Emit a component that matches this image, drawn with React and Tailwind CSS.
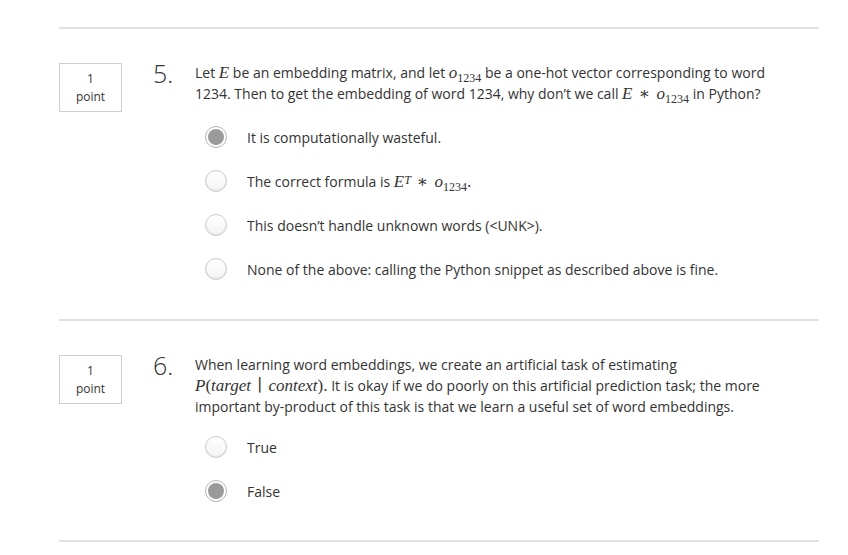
import React from 'react';

const mathFont = "font-['Liberation_Serif','DejaVu_Serif',serif] text-[17px] leading-none";

// italic math variable
const V = ({ children }) => <span className="italic">{children}</span>;

const Sub = ({ base, sub }) => (
    <span className={mathFont}>
        <V>{base}</V>
        <span className="relative top-[4px] text-[12px] leading-none not-italic">{sub}</span>
    </span>
);

const Radio = ({ checked }) =>
    checked ? (
        <span className="flex h-[22px] w-[22px] shrink-0 items-center justify-center rounded-full border border-[#b4b4b4] bg-white">
            <span className="h-[16px] w-[16px] rounded-full bg-[#9a9a9a]" />
        </span>
    ) : (
        <span className="h-[22px] w-[22px] shrink-0 rounded-full border border-[#c9c9c9] bg-gradient-to-b from-white to-[#f3f3f3] shadow-[inset_0_-1px_1px_rgba(0,0,0,0.06)]" />
    );

const Option = ({ checked, children }) => (
    <div className="flex h-[44px] items-center pl-[10px]">
        <Radio checked={checked} />
        <div className="ml-[20px] text-[14px] text-[#333]">{children}</div>
    </div>
);

const Question = ({ num, text, children, textTop, optsTop, bottom }) => (
    <div className={`flex border-t-2 border-[#e2e2e2] pt-[34px] ${bottom}`}>
        <div className="flex h-[49px] w-[63px] shrink-0 flex-col items-center justify-center border border-[#cfcfcf] text-[12px] leading-[18px] text-[#333]">
            <span>1</span>
            <span>point</span>
        </div>
        <div className="ml-[31px] mt-[-6px] w-[42px] shrink-0 text-[25px] font-light leading-[32px] text-[#333]">{num}.</div>
        <div className="flex-1">
            <div className={`${textTop} pr-[40px] text-[14px] leading-[21px] text-[#333]`}>{text}</div>
            <div className={optsTop}>{children}</div>
        </div>
    </div>
);

export default function App() {
    return (
        <div className="min-h-[555px] bg-white px-[59px] pt-[27px] font-['Open_Sans',sans-serif] text-[#333]">
            <div className="w-[760px]">
                <Question
                    num="5"
                    textTop="mt-[-1px]"
                    optsTop="mt-[11px]"
                    bottom="pb-[28px]"
                    text={
                        <>
                            Let <span className={mathFont}><V>E</V></span> be an embedding matrix, and let <Sub base="o" sub="1234" /> be a one-hot vector corresponding to word 1234. Then to get the embedding of word 1234, why don’t we call{' '}
                            <span className={mathFont}><V>E</V> <span className="mx-[2px]">∗</span> </span><Sub base="o" sub="1234" /> in Python?
                        </>
                    }
                >
                    <Option checked>It is computationally wasteful.</Option>
                    <Option>
                        The correct formula is{' '}
                        <span className={mathFont}>
                            <V>E</V>
                            <sup className="relative top-[-3px] text-[12px] italic">T</sup>
                            <span className="mx-[6px]">∗</span>
                        </span>
                        <Sub base="o" sub="1234" />
                        <span className={mathFont}>.</span>
                    </Option>
                    <Option>This doesn’t handle unknown words (&lt;UNK&gt;).</Option>
                    <Option>None of the above: calling the Python snippet as described above is fine.</Option>
                </Question>
                <Question
                    num="6"
                    textTop="mt-[-1px]"
                    optsTop="mt-[8px]"
                    bottom="pb-[27px]"
                    text={
                        <>
                            When learning word embeddings, we create an artificial task of estimating
                            <br />
                            <span className={mathFont}>
                                <V>P</V>(<V>target</V> <span className="mx-[2px]">∣</span> <V>context</V>).
                            </span>{' '}
                            It is okay if we do poorly on this artificial prediction task; the more important by-product of this task is that we learn a useful set of word embeddings.
                        </>
                    }
                >
                    <Option>True</Option>
                    <Option checked>False</Option>
                </Question>
                <div className="border-t-2 border-[#e2e2e2]" />
            </div>
        </div>
    );
}
